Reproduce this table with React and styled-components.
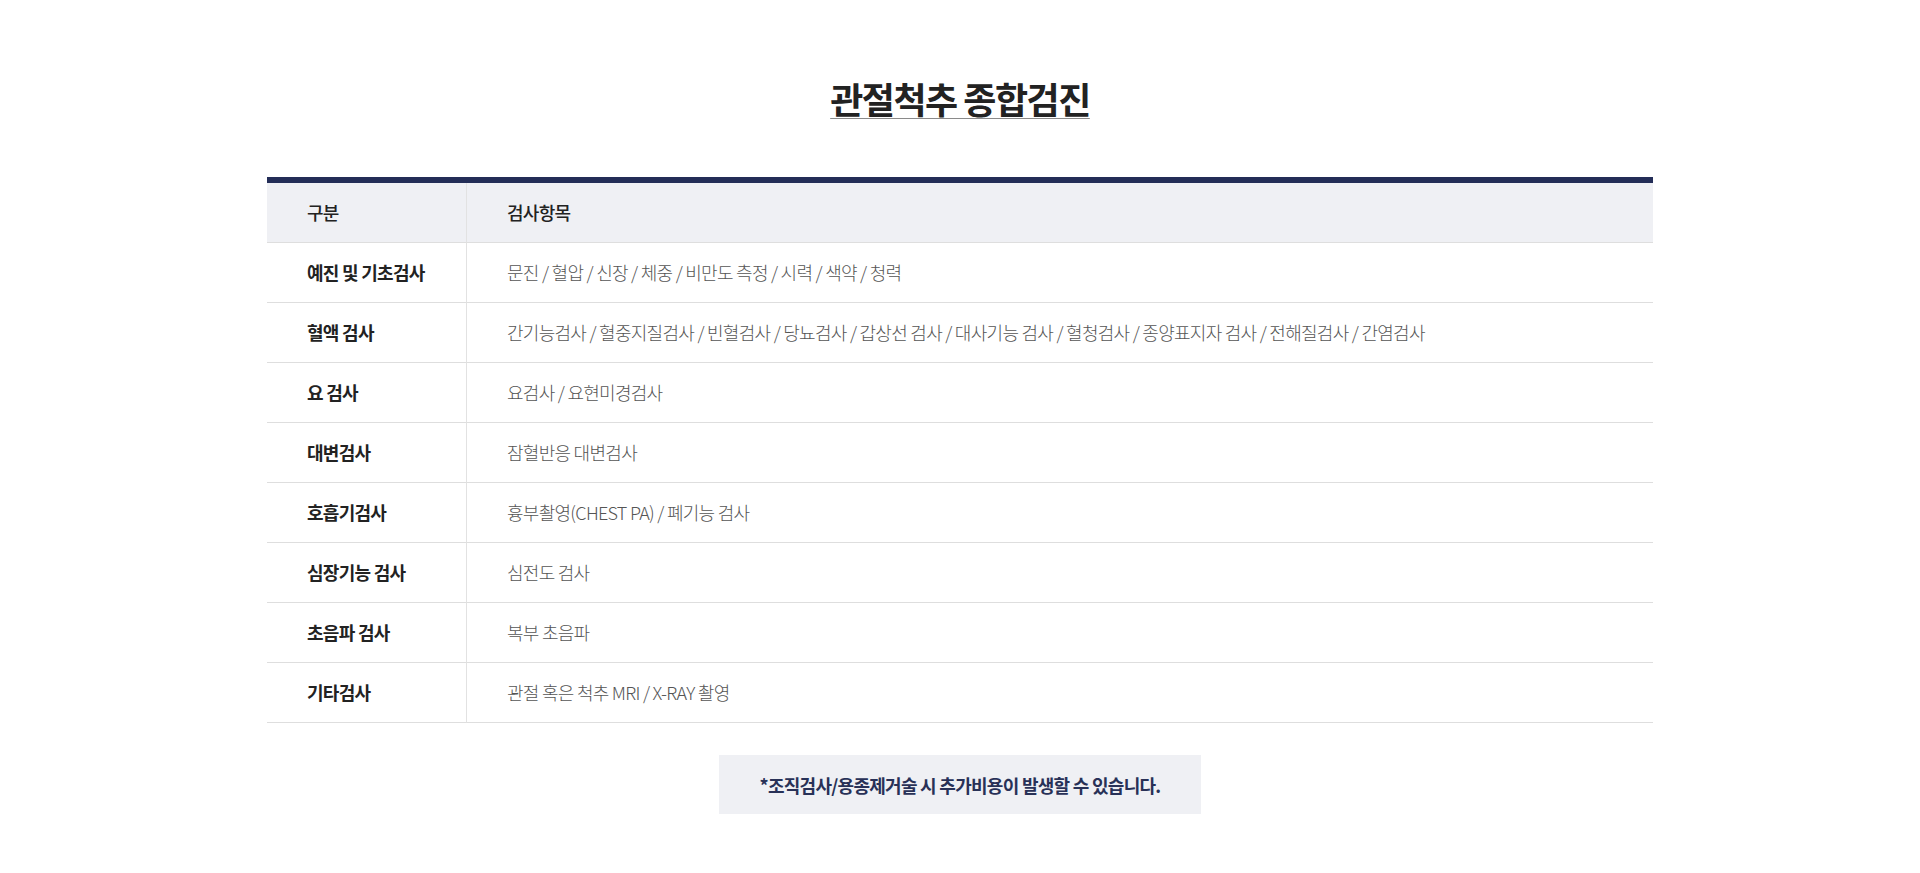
import React from "react";
import styled, { createGlobalStyle } from "styled-components";

const GlobalStyle = createGlobalStyle`
    body {
        margin: 0;
        background: #fff;
        font-family: "Noto Sans CJK KR", "Noto Sans", sans-serif;
    }
`;

const Page = styled.div`
    width: 1386px;
    margin: 0 auto;
    padding-top: 77px;
    display: flex;
    flex-direction: column;
    align-items: center;
`;

const Title = styled.h2`
    margin: 0;
    font-size: 36px;
    line-height: 43px;
    font-weight: 700;
    letter-spacing: -1.5px;
    color: #222;
    text-decoration: underline;
    text-decoration-color: #8a8a8a;
    text-decoration-thickness: 1px;
    text-underline-offset: 4px;
`;

const Table = styled.table`
    width: 100%;
    margin-top: 57px;
    border-collapse: separate;
    border-spacing: 0;
    border-top: 6px solid #232d57;
    letter-spacing: -0.04em;
    font-size: 18px;
`;

const Row = styled.tr`
    height: 60px;
    background: ${p => (p.$head ? "#eff0f4" : "#fff")};
`;

const LabelCell = styled.td`
    width: 159px;
    padding: 0 0 2px 40px;
    border-bottom: 1px solid #dedede;
    border-right: 1px solid #e2e2e2;
    color: #222;
    font-weight: ${p => (p.$head ? 500 : 700)};
`;

const ItemCell = styled.td`
    padding: 0 0 2px 40px;
    border-bottom: 1px solid #dedede;
    color: ${p => (p.$head ? "#222" : "#555")};
    font-weight: ${p => (p.$head ? 500 : 300)};
`;

const Note = styled.div`
    margin-top: 32px;
    width: 482px;
    height: 59px;
    display: flex;
    align-items: center;
    justify-content: center;
    background: #eff0f4;
    color: #283157;
    font-size: 18px;
    font-weight: 700;
    letter-spacing: -0.04em;
`;

const rows = [
    ["예진 및 기초검사", "문진 / 혈압 / 신장 / 체중 / 비만도 측정 / 시력 / 색약 / 청력"],
    ["혈액 검사", "간기능검사 / 혈중지질검사 / 빈혈검사 / 당뇨검사 / 갑상선 검사 / 대사기능 검사 / 혈청검사 / 종양표지자 검사 / 전해질검사 / 간염검사"],
    ["요 검사", "요검사 / 요현미경검사"],
    ["대변검사", "잠혈반응 대변검사"],
    ["호흡기검사", "흉부촬영(CHEST PA) / 폐기능 검사"],
    ["심장기능 검사", "심전도 검사"],
    ["초음파 검사", "복부 초음파"],
    ["기타검사", "관절 혹은 척추 MRI / X-RAY 촬영"],
];

function App() {
    return (
        <>
            <GlobalStyle />
            <Page>
                <Title>관절척추 종합검진</Title>
                <Table>
                    <thead>
                        <Row $head>
                            <LabelCell $head>구분</LabelCell>
                            <ItemCell $head>검사항목</ItemCell>
                        </Row>
                    </thead>
                    <tbody>
                        {rows.map(([label, items]) => (
                            <Row key={label}>
                                <LabelCell>{label}</LabelCell>
                                <ItemCell>{items}</ItemCell>
                            </Row>
                        ))}
                    </tbody>
                </Table>
                <Note>*조직검사/용종제거술 시 추가비용이 발생할 수 있습니다.</Note>
            </Page>
        </>
    );
}

export default App;
